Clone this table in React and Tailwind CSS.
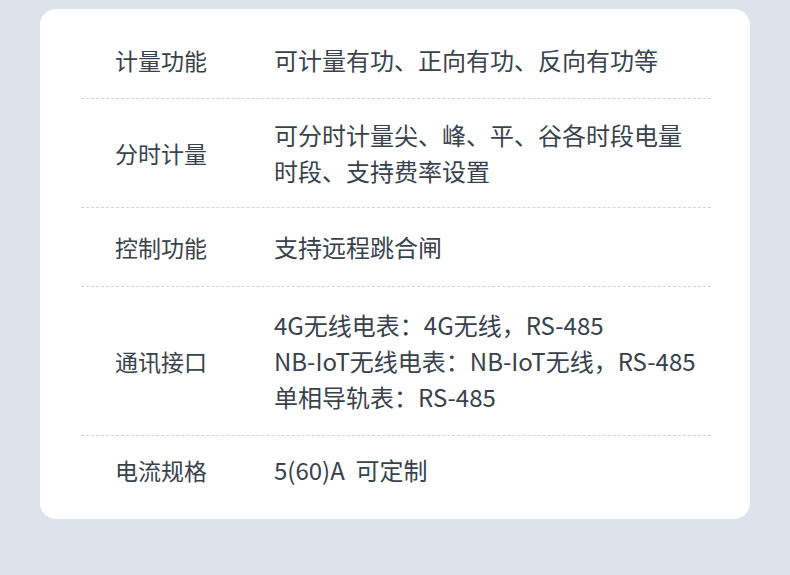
import React from "react";

const rows = [
  { label: "计量功能", lines: ["可计量有功、正向有功、反向有功等"], pad: "pt-5 pb-5" },
  {
    label: "分时计量",
    lines: ["可分时计量尖、峰、平、谷各时段电量", "时段、支持费率设置"],
    pad: "pt-[18px] pb-[18px]",
  },
  { label: "控制功能", lines: ["支持远程跳合闸"], pad: "pt-[21px] pb-[21px]" },
  {
    label: "通讯接口",
    lines: ["4G无线电表：4G无线，RS-485", "NB-IoT无线电表：NB-IoT无线，RS-485", "单相导轨表：RS-485"],
    pad: "pt-5 pb-5",
  },
  { label: "电流规格", lines: ["5(60)A\u00a0 可定制"], pad: "pt-4 pb-[17px]" },
];

export default function App() {
  return (
    <div
      className="w-[790px] h-[575px] bg-[#dde3eb] pt-[9px] pl-[40px]"
      style={{ fontFamily: '"Noto Sans CJK SC", "Noto Sans", sans-serif' }}
    >
      <div className="w-[710px] bg-white rounded-2xl pt-[13px] pb-[14px] pl-[41px] pr-[39px] text-[#38424c]">
        {rows.map((row, i) => (
          <div
            key={row.label}
            className={`flex items-center ${row.pad} ${
              i < rows.length - 1 ? "border-b border-dashed border-[#d2d5d9]" : ""
            }`}
          >
            <div className="w-[193px] shrink-0 pl-[34px] text-[23px] leading-[36px]">{row.label}</div>
            <div className="flex flex-col text-[24px] leading-[36px]">
              {row.lines.map((line) => (
                <span key={line} className="whitespace-nowrap">
                  {line}
                </span>
              ))}
            </div>
          </div>
        ))}
      </div>
    </div>
  );
}
